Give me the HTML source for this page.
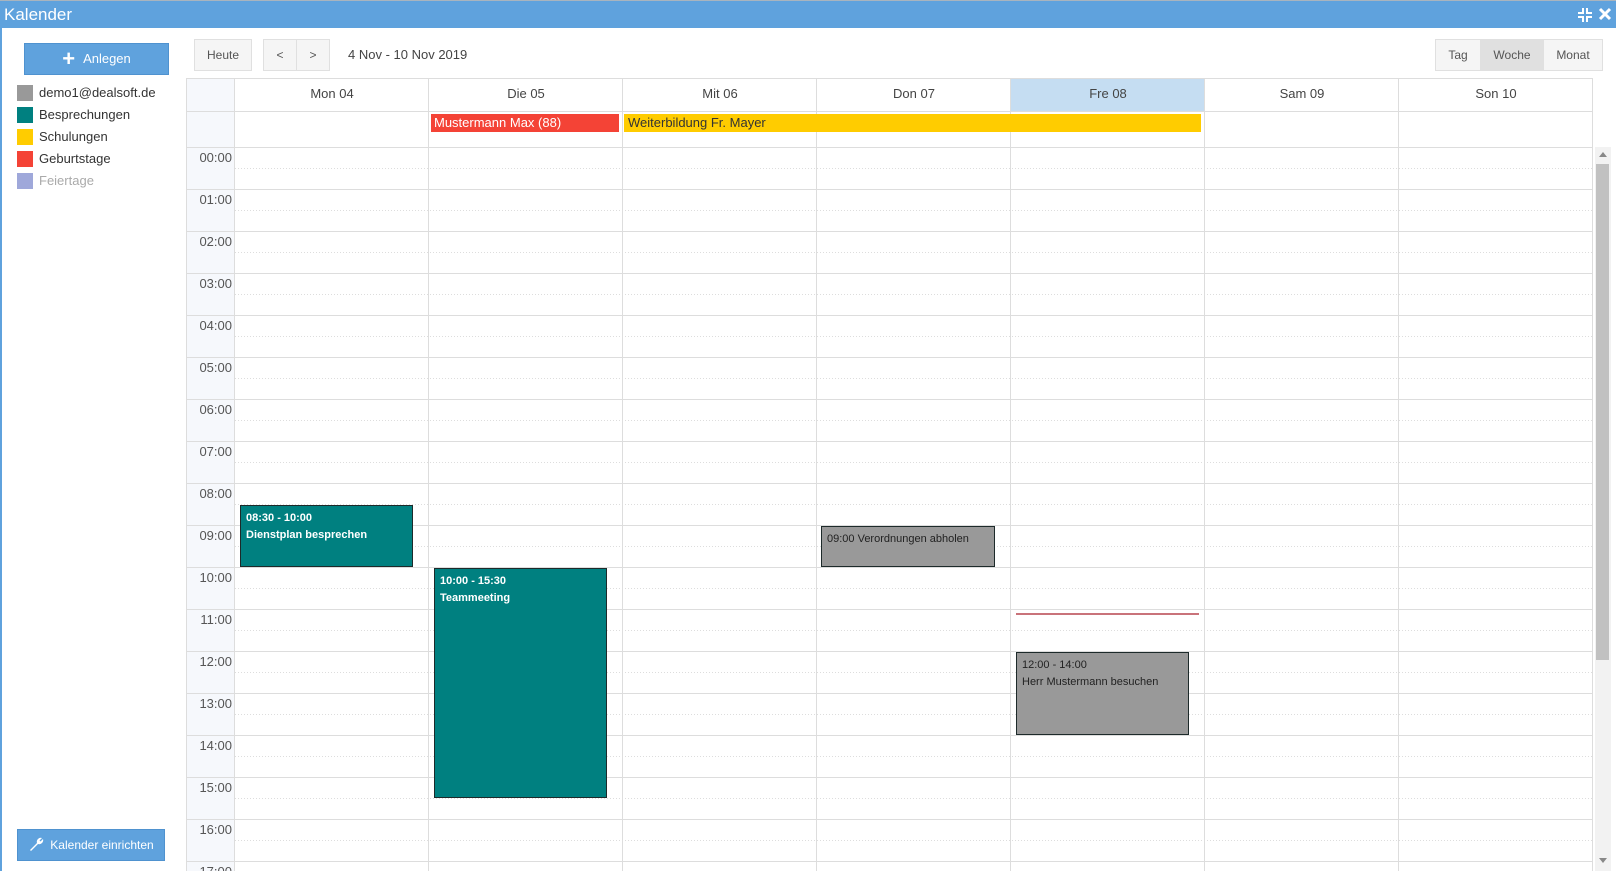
<!DOCTYPE html>
<html><head><meta charset="utf-8"><style>
*{box-sizing:border-box;margin:0;padding:0}
body{width:1616px;height:871px;overflow:hidden;background:#fff;font-family:"Liberation Sans",sans-serif;position:relative;color:#333}
.a{position:absolute}
.title{left:0;top:0;width:1616px;height:28px;background:#5fa2dd;color:#fff;font-size:17px;line-height:28px;padding-left:4px;border-top:1px solid #a9b4be}
.lb{left:0;top:28px;width:2px;height:843px;background:#5fa2dd}
.btn{background:#f5f5f5;border:1px solid #e0e0e0;font-size:12px;color:#555;text-align:center}
.bb{background:#5fa2dd;border:1px solid #4f92cf;color:#fff;font-size:12px;text-align:center}
.leg{left:17px;font-size:13px;line-height:16px}
.leg i{display:inline-block;width:16px;height:16px;vertical-align:top;margin-right:6px}
.hd{font-size:13px;text-align:center;line-height:32px;color:#444}
.ev{border:1px solid #1d2a2a;color:#fff;font-size:11px;font-weight:bold;padding:4px 5px;line-height:17px}
.tl{font-size:13px;color:#555;width:46px;text-align:right}
</style></head><body>
<div class="a title">Kalender</div>
<svg class="a" style="left:1577px;top:7px" width="16" height="16" viewBox="0 0 16 16" fill="#fff"><path d="M5 1h2v6H1V5h4zM9 1h2v4h4v2H9zM1 9h6v6H5v-4H1zM9 9h6v2h-4v4H9z"/></svg>
<svg class="a" style="left:1598px;top:7px" width="14" height="14" viewBox="0 0 14 14"><path d="M2 2L12 12M12 2L2 12" stroke="#fff" stroke-width="3"/></svg>
<div class="a lb"></div>

<div class="a bb" style="left:24px;top:43px;width:145px;height:32px;line-height:30px;font-size:13px"><span style="font-size:22px;font-weight:bold;vertical-align:-3px;margin-right:8px">+</span>Anlegen</div>
<div class="a leg" style="top:85px"><i style="background:#999"></i>demo1@dealsoft.de</div>
<div class="a leg" style="top:107px"><i style="background:#008080"></i>Besprechungen</div>
<div class="a leg" style="top:129px"><i style="background:#fc0"></i>Schulungen</div>
<div class="a leg" style="top:151px"><i style="background:#f44336"></i>Geburtstage</div>
<div class="a leg" style="top:173px;color:#aaa"><i style="background:#9fa8da"></i>Feiertage</div>
<div class="a bb" style="left:17px;top:829px;width:148px;height:32px;line-height:30px"><svg width="16" height="16" viewBox="0 0 16 16" style="vertical-align:-3px;margin-right:6px"><path d="M2 14l7-7a4 4 0 0 1 5-5l-2.5 2.5 1 1L15 3a4 4 0 0 1-5 5l-7 7z" fill="#fff"/></svg>Kalender einrichten</div>

<div class="a btn" style="left:194px;top:39px;width:58px;height:32px;line-height:30px">Heute</div>
<div class="a btn" style="left:263px;top:39px;width:34px;height:32px;line-height:30px">&lt;</div>
<div class="a btn" style="left:296px;top:39px;width:34px;height:32px;line-height:30px">&gt;</div>
<div class="a" style="left:348px;top:47px;font-size:13px;color:#444">4 Nov - 10 Nov 2019</div>
<div class="a btn" style="left:1435px;top:39px;width:46px;height:32px;line-height:30px">Tag</div>
<div class="a btn" style="left:1480px;top:39px;width:64px;height:32px;line-height:30px;background:#e0e0e0">Woche</div>
<div class="a btn" style="left:1543px;top:39px;width:60px;height:32px;line-height:30px">Monat</div>

<div class="a" style="left:186px;top:78px;width:49px;height:793px;background:#f6f8fc;border-left:1px solid #ddd"></div>
<div class="a" style="left:1011px;top:78px;width:194px;height:33px;background:#c5ddf2"></div>
<svg class="a" style="left:0;top:0" width="1616" height="871">
<g stroke="#ddd" stroke-width="1" shape-rendering="crispEdges">
<line x1="186" y1="78.5" x2="1593" y2="78.5"/>
<line x1="186" y1="111.5" x2="1593" y2="111.5"/>
<line x1="186" y1="147.5" x2="1593" y2="147.5"/>
<line x1="234.5" y1="78" x2="234.5" y2="871"/>
<line x1="428.5" y1="78" x2="428.5" y2="871"/>
<line x1="622.5" y1="78" x2="622.5" y2="871"/>
<line x1="816.5" y1="78" x2="816.5" y2="871"/>
<line x1="1010.5" y1="78" x2="1010.5" y2="871"/>
<line x1="1204.5" y1="78" x2="1204.5" y2="871"/>
<line x1="1398.5" y1="78" x2="1398.5" y2="871"/>
<line x1="1592.5" y1="78" x2="1592.5" y2="871"/>
<line x1="186" y1="189.5" x2="1593" y2="189.5"/><line x1="186" y1="231.5" x2="1593" y2="231.5"/><line x1="186" y1="273.5" x2="1593" y2="273.5"/><line x1="186" y1="315.5" x2="1593" y2="315.5"/><line x1="186" y1="357.5" x2="1593" y2="357.5"/><line x1="186" y1="399.5" x2="1593" y2="399.5"/><line x1="186" y1="441.5" x2="1593" y2="441.5"/><line x1="186" y1="483.5" x2="1593" y2="483.5"/><line x1="186" y1="525.5" x2="1593" y2="525.5"/><line x1="186" y1="567.5" x2="1593" y2="567.5"/><line x1="186" y1="609.5" x2="1593" y2="609.5"/><line x1="186" y1="651.5" x2="1593" y2="651.5"/><line x1="186" y1="693.5" x2="1593" y2="693.5"/><line x1="186" y1="735.5" x2="1593" y2="735.5"/><line x1="186" y1="777.5" x2="1593" y2="777.5"/><line x1="186" y1="819.5" x2="1593" y2="819.5"/><line x1="186" y1="861.5" x2="1593" y2="861.5"/>
</g>
<g stroke="#ddd" stroke-dasharray="1,2" shape-rendering="crispEdges">
<line x1="235" y1="168.5" x2="1593" y2="168.5"/><line x1="235" y1="210.5" x2="1593" y2="210.5"/><line x1="235" y1="252.5" x2="1593" y2="252.5"/><line x1="235" y1="294.5" x2="1593" y2="294.5"/><line x1="235" y1="336.5" x2="1593" y2="336.5"/><line x1="235" y1="378.5" x2="1593" y2="378.5"/><line x1="235" y1="420.5" x2="1593" y2="420.5"/><line x1="235" y1="462.5" x2="1593" y2="462.5"/><line x1="235" y1="504.5" x2="1593" y2="504.5"/><line x1="235" y1="546.5" x2="1593" y2="546.5"/><line x1="235" y1="588.5" x2="1593" y2="588.5"/><line x1="235" y1="630.5" x2="1593" y2="630.5"/><line x1="235" y1="672.5" x2="1593" y2="672.5"/><line x1="235" y1="714.5" x2="1593" y2="714.5"/><line x1="235" y1="756.5" x2="1593" y2="756.5"/><line x1="235" y1="798.5" x2="1593" y2="798.5"/><line x1="235" y1="840.5" x2="1593" y2="840.5"/>
</g>
<g font-family="Liberation Sans" font-size="13" fill="#555" text-anchor="end">
<text x="232" y="162">00:00</text><text x="232" y="204">01:00</text><text x="232" y="246">02:00</text><text x="232" y="288">03:00</text><text x="232" y="330">04:00</text><text x="232" y="372">05:00</text><text x="232" y="414">06:00</text><text x="232" y="456">07:00</text><text x="232" y="498">08:00</text><text x="232" y="540">09:00</text><text x="232" y="582">10:00</text><text x="232" y="624">11:00</text><text x="232" y="666">12:00</text><text x="232" y="708">13:00</text><text x="232" y="750">14:00</text><text x="232" y="792">15:00</text><text x="232" y="834">16:00</text><text x="232" y="876">17:00</text>
</g>
</svg>
<div class="a hd" style="left:235px;top:78px;width:194px">Mon 04</div>
<div class="a hd" style="left:429px;top:78px;width:194px">Die 05</div>
<div class="a hd" style="left:623px;top:78px;width:194px">Mit 06</div>
<div class="a hd" style="left:817px;top:78px;width:194px">Don 07</div>
<div class="a hd" style="left:1011px;top:78px;width:194px">Fre 08</div>
<div class="a hd" style="left:1205px;top:78px;width:194px">Sam 09</div>
<div class="a hd" style="left:1399px;top:78px;width:194px">Son 10</div>

<div class="a" style="left:431px;top:114px;width:188px;height:18px;background:#f44336;color:#fff;font-size:13px;line-height:18px;padding-left:3px">Mustermann Max (88)</div>
<div class="a" style="left:624px;top:114px;width:577px;height:18px;background:#fc0;color:#333;font-size:13px;line-height:18px;padding-left:4px">Weiterbildung Fr. Mayer</div>

<div class="a ev" style="left:240px;top:505px;width:173px;height:62px;background:#008080">08:30 - 10:00<br>Dienstplan besprechen</div>
<div class="a ev" style="left:434px;top:568px;width:173px;height:230px;background:#008080">10:00 - 15:30<br>Teammeeting</div>
<div class="a ev" style="left:821px;top:526px;width:174px;height:41px;background:#999;color:#222;font-weight:normal">09:00 Verordnungen abholen</div>
<div class="a" style="left:1016px;top:613px;width:183px;height:2px;background:#c9737a"></div>
<div class="a ev" style="left:1016px;top:652px;width:173px;height:83px;background:#999;color:#222;font-weight:normal">12:00 - 14:00<br>Herr Mustermann besuchen</div>

<div class="a" style="left:1595px;top:147px;width:16px;height:724px;background:#f2f2f2"></div>
<div class="a" style="left:1596px;top:164px;width:13px;height:496px;background:#c1c1c1"></div>
<div class="a" style="left:1599px;top:152px;width:0;height:0;border-left:4px solid transparent;border-right:4px solid transparent;border-bottom:5px solid #888"></div>
<div class="a" style="left:1599px;top:858px;width:0;height:0;border-left:4px solid transparent;border-right:4px solid transparent;border-top:5px solid #888"></div>
</body></html>
